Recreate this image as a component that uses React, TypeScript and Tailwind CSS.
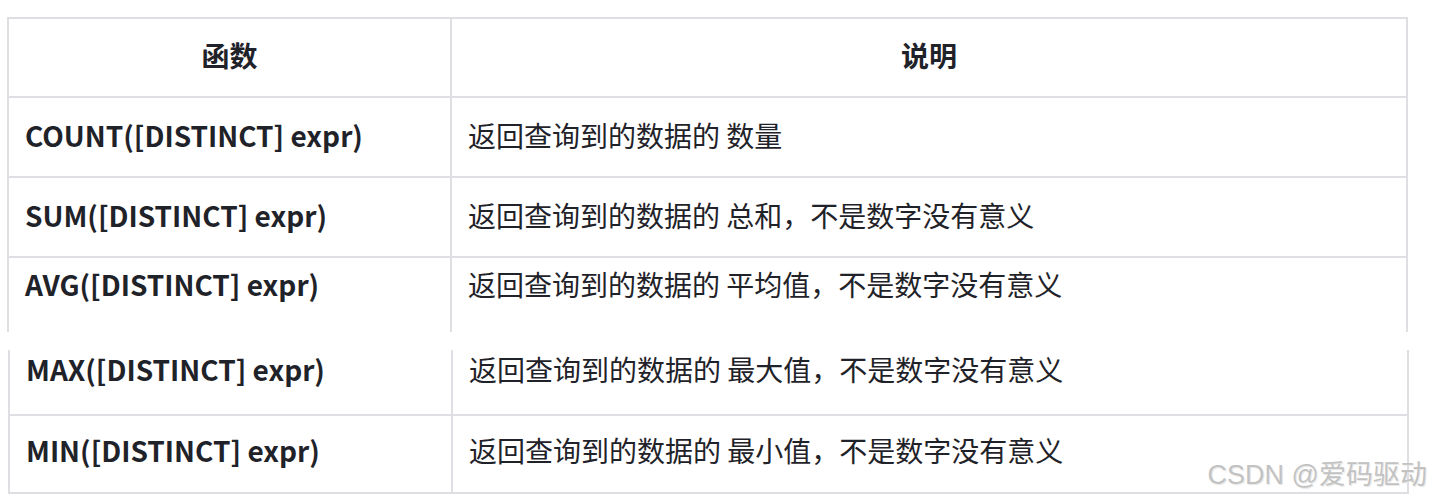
import React from "react";

const font = { fontFamily: '"Noto Sans CJK SC", "Noto Sans", sans-serif' };

function Row({
  fn,
  desc,
  rowClass,
  last,
}: {
  fn: string;
  desc: string;
  rowClass: string;
  last?: boolean;
}) {
  return (
    <div className={`flex ${last ? "" : "border-b-2 border-[#dfdfe3]"}`}>
      <div className={`w-[441px] shrink-0 flex items-center pl-[16px] text-[28px] font-bold text-[#1f2329] ${rowClass}`}>
        {fn}
      </div>
      <div className={`flex-1 border-l-2 border-[#dfdfe3] flex items-center pl-[16px] text-[28px] text-[#1f2329] ${rowClass}`}>
        {desc}
      </div>
    </div>
  );
}

export default function App() {
  return (
    <div className="relative w-[1431px] h-[501px] bg-white overflow-hidden pt-[17px]" style={font}>
      {/* upper segment */}
      <div className="ml-[7px] w-[1401px] border-t-2 border-l-2 border-r-2 border-[#dfdfe3]">
        <div className="flex border-b-2 border-[#dfdfe3]">
          <div className="w-[441px] shrink-0 h-[77px] pb-[5px] flex items-center justify-center text-[28px] font-bold text-[#1f2329]">
            函数
          </div>
          <div className="flex-1 h-[77px] pb-[5px] border-l-2 border-[#dfdfe3] flex items-center justify-center text-[28px] font-bold text-[#1f2329]">
            说明
          </div>
        </div>
        <Row fn="COUNT([DISTINCT] expr)" desc="返回查询到的数据的 数量" rowClass="h-[78px] pb-[5px]" />
        <Row fn="SUM([DISTINCT] expr)" desc="返回查询到的数据的 总和，不是数字没有意义" rowClass="h-[78px] pb-[5px]" />
        <Row fn="AVG([DISTINCT] expr)" desc="返回查询到的数据的 平均值，不是数字没有意义" rowClass="h-[74px] pb-[23px]" last />
      </div>

      {/* lower segment */}
      <div className="ml-[8px] mt-[18px] w-[1401px] border-l-2 border-r-2 border-[#dfdfe3]">
        <Row fn="MAX([DISTINCT] expr)" desc="返回查询到的数据的 最大值，不是数字没有意义" rowClass="h-[64px] pb-[26px]" />
        <div className="border-b-2 border-[#dfdfe3]">
          <Row fn="MIN([DISTINCT] expr)" desc="返回查询到的数据的 最小值，不是数字没有意义" rowClass="h-[76px] pb-[8px]" last />
        </div>
      </div>

      {/* watermark */}
      <div
        className="absolute right-[4px] top-[462px] text-[27px] text-[#c2c2c2] leading-none whitespace-nowrap [text-shadow:0_0_1px_#ffffff,1px_1px_1px_#e4e4e4]"
        style={{ fontFamily: '"Liberation Sans", "Noto Sans CJK SC", sans-serif' }}
      >
        CSDN @爱码驱动
      </div>
    </div>
  );
}
